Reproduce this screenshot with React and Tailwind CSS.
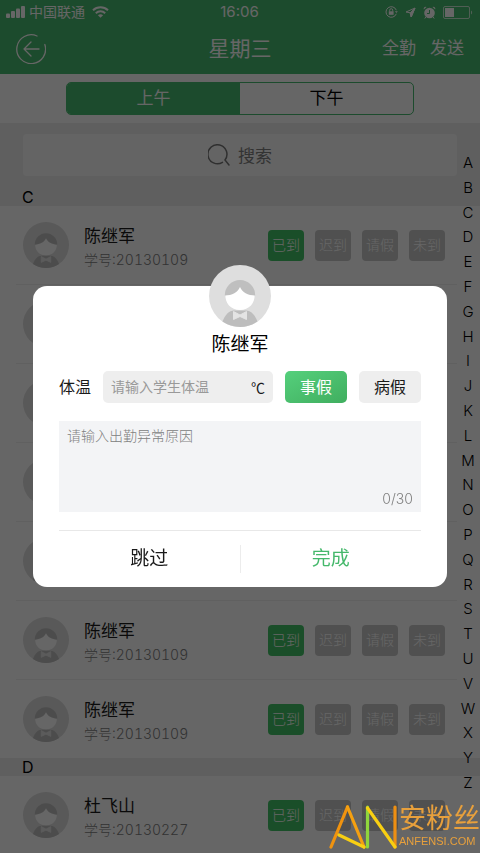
import React, { useState } from 'react';

const LETTERS = 'ABCDEFGHIJKLMNOPQRSTUVWXYZ'.split('');
const STATUSES = ['已到', '迟到', '请假', '未到'];
const MAX_REASON = 30;

const GROUPS = [
  {
    letter: 'C',
    students: Array.from({ length: 7 }, (_, i) => ({ id: `c${i}`, name: '陈继军', no: '20130109' })),
  },
  {
    letter: 'D',
    students: [{ id: 'd0', name: '杜飞山', no: '20130227' }],
  },
];

function Avatar({ className }) {
  return (
    <svg viewBox="0 0 62 62" className={className} aria-hidden="true">
      <circle cx="31" cy="31" r="31" fill="#dedede" />
      <path d="M16.500 29C24 27 28 24 31 19C34 24 38 27 45.500 29C46.500 38 40 45 31 45C22 45 15.500 38 16.500 29Z" fill="#fff" />
      <path d="M15.800 30.500A15.200 15.500 0 0 1 46.200 30.500C39 30.500 33 27 31 22C29 27 23 30.500 15.800 30.500Z" fill="#bfbfbf" />
      <path d="M13.500 56.500C16 50 20 45.500 25 45.500H37C42 45.500 46 50 48.500 56.500A31 31 0 0 1 13.500 56.500Z" fill="#bdbdbd" />
      <path d="M24.500 46.500L31 50L37.500 46.500V54.500L31 51.500L24.500 54.500Z" fill="#e4e4e4" stroke="#e4e4e4" strokeLinejoin="round" />
    </svg>
  );
}

function StatusBar() {
  return (
    <div className="grid grid-cols-3 items-center h-6 pl-[6px] pr-[7px] text-sm">
      <div className="flex items-center">
        <svg width="20" height="12" viewBox="0 0 20 12" fill="currentColor" aria-hidden="true">
          <rect x="0" y="7.500" width="4" height="4.500" rx="1" />
          <rect x="5" y="5" width="4" height="7" rx="1" />
          <rect x="10" y="2.500" width="4" height="9.500" rx="1" />
          <rect x="15" y="0" width="4" height="12" rx="1" />
        </svg>
        <span className="ml-[3px]">中国联通</span>
        <svg width="17" height="12" viewBox="0 0 17 12" className="ml-[7px]" fill="none" stroke="currentColor" strokeWidth="2" aria-hidden="true">
          <path d="M1 4.200C5.200 0.200 11.800 0.200 16 4.200" />
          <path d="M3.800 7.200C6.500 4.700 10.500 4.700 13.200 7.200" />
          <path d="M8.500 11.800L5.900 9.200C7.400 7.900 9.600 7.900 11.100 9.200Z" fill="currentColor" stroke="none" />
        </svg>
      </div>
      <span className="text-center text-[15px]">16:06</span>
      <div className="flex items-center justify-end gap-[7px]">
        <svg width="13" height="12" viewBox="0 0 13 12" fill="none" stroke="currentColor" aria-hidden="true">
          <path d="M11.300 4.200A5.300 5.300 0 1 0 11.300 7.800" />
          <path d="M9.800 5.200L11.500 7L12.800 5.200Z" fill="currentColor" stroke="none" />
          <rect x="3.800" y="5.300" width="4.800" height="3.500" fill="currentColor" stroke="none" />
          <path d="M4.700 5.500V4.200A1.500 1.500 0 0 1 7.700 4.200V5.500" />
        </svg>
        <svg width="11" height="11" viewBox="0 0 11 11" fill="none" stroke="currentColor" strokeLinejoin="round" aria-hidden="true">
          <path d="M10 1L6.200 10L5.200 5.800L1 5Z" />
          <path d="M10 1L6.200 10L5.200 5.800Z" fill="currentColor" />
        </svg>
        <svg width="13" height="13" viewBox="0 0 13 13" fill="currentColor" aria-hidden="true">
          <circle cx="6.500" cy="7" r="5.300" />
          <path d="M0.800 3.500A2 2 0 0 1 3.500 1Z" />
          <path d="M12.200 3.500A2 2 0 0 0 9.500 1Z" />
          <path d="M2.800 11L1.800 12.500M10.200 11L11.200 12.500" stroke="currentColor" />
          <path d="M6.500 4V7.500H4" fill="none" stroke="#48bb70" />
        </svg>
        <svg width="30" height="13" viewBox="0 0 30 13" fill="none" aria-hidden="true">
          <rect x="0.500" y="0.500" width="26" height="12" rx="1.500" stroke="currentColor" opacity="0.700" />
          <rect x="2" y="2" width="9" height="9" fill="currentColor" />
          <path d="M28 4.500C29.500 5 29.500 8 28 8.500Z" fill="currentColor" opacity="0.700" />
        </svg>
      </div>
    </div>
  );
}

function NavBar() {
  return (
    <div className="grid grid-cols-3 items-center h-[50px] px-4">
      <button type="button" aria-label="返回" className="w-[30px]">
        <svg width="30" height="30" viewBox="0 0 30 30" fill="none" stroke="currentColor" strokeWidth="1.300" strokeLinecap="round" strokeLinejoin="round">
          <path d="M21 2A14.400 14.400 0 1 0 28.800 10.500" />
          <path d="M23 15H8M15 8L8 15L15 22" />
        </svg>
      </button>
      <h1 className="text-center text-[21px]">星期三</h1>
      <div className="flex justify-end gap-[14px] text-[17px]">
        <button type="button">全勤</button>
        <button type="button">发送</button>
      </div>
    </div>
  );
}

function StudentRow({ student }) {
  const [status, setStatus] = useState('已到');

  return (
    <li className="flex items-center h-[78px] box-content pl-[7px] pr-3 border-b border-[#f0f0f0] last:border-b-0">
      <Avatar className="w-[46px] h-[46px] shrink-0" />
      <div className="ml-[15px] pt-[5px] flex-1">
        <p className="text-[17px] leading-6">{student.name}</p>
        <p className="text-sm leading-6 text-[#808080] font-light tabular-nums">学号:{student.no}</p>
      </div>
      <div className="flex gap-[11px]">
        {STATUSES.map((item) => (
          <button
            key={item}
            type="button"
            onClick={() => setStatus(item)}
            className={`w-9 h-[31px] rounded text-sm font-light text-white ${
              item === status ? 'bg-[#43c466]' : 'bg-[#c8c8c8]'
            }`}
          >
            {item}
          </button>
        ))}
      </div>
    </li>
  );
}

function AbsenceDialog() {
  const [type, setType] = useState('事假');
  const [temperature, setTemperature] = useState('');
  const [reason, setReason] = useState('');

  return (
    <div className="fixed inset-0 flex flex-col justify-center px-[33px] pb-px bg-black/60">
      <Avatar className="relative z-10 w-[62px] h-[62px] mx-auto -mb-[41px]" />
      <div role="dialog" aria-label="陈继军" className="bg-white rounded-[14px] px-[26px] pt-[47px]">
        <h2 className="text-center text-[19px] leading-6 text-black">陈继军</h2>

        <div className="flex items-center gap-3 mt-[14px] h-8 text-base">
          <label htmlFor="temperature">体温</label>
          <div className="flex items-center flex-1 min-w-0 h-8 px-2 rounded-[5px] bg-[#eee]">
            <input
              id="temperature"
              value={temperature}
              onChange={(e) => setTemperature(e.target.value)}
              placeholder="请输入学生体温"
              className="flex-1 min-w-0 bg-transparent text-sm outline-none placeholder:text-[#999]"
            />
            <span className="font-['Noto_Sans_CJK_SC',sans-serif] text-sm">℃</span>
          </div>
          {['事假', '病假'].map((item) => (
            <button
              key={item}
              type="button"
              onClick={() => setType(item)}
              className={`w-[62px] h-8 rounded-[5px] ${
                item === type ? 'bg-linear-to-br from-[#55d07c] to-[#40ae5f] text-white' : 'bg-[#eee]'
              }`}
            >
              {item}
            </button>
          ))}
        </div>

        <div className="flex flex-col mt-[18px] h-[91px] px-2 py-[3px] bg-[#f3f4f6] text-sm">
          <textarea
            aria-label="出勤异常原因"
            value={reason}
            maxLength={MAX_REASON}
            onChange={(e) => setReason(e.target.value)}
            placeholder="请输入出勤异常原因"
            className="flex-1 resize-none bg-transparent leading-6 outline-none font-light placeholder:text-[#808080]"
          />
          <span className="text-right font-light text-[#808080]">
            {reason.length}/{MAX_REASON}
          </span>
        </div>

        <div className="flex items-center mt-[18px] border-t border-[#e8e8e8] text-[19px]">
          <button type="button" className="flex-1 h-14">跳过</button>
          <span className="w-px h-7 bg-[#ececec]" />
          <button type="button" className="flex-1 h-14 text-[#45b86b]">完成</button>
        </div>
      </div>
    </div>
  );
}

function Watermark() {
  return (
    <div className="fixed right-0 bottom-1 flex items-end text-[#e8a03c]">
      <svg width="70" height="44" viewBox="0 0 70 44" fill="none" strokeWidth="3.200" strokeLinecap="round" aria-hidden="true">
        <path d="M18.500 2L2 42" stroke="#f0930f" />
        <path d="M18.500 2L35 42" stroke="#f5a010" />
        <path d="M10 30L35 42" stroke="#f8cf12" />
        <path d="M38.500 2V42" stroke="#8fd63c" />
        <path d="M66 2V42" stroke="#ee8f12" />
        <path d="M38.500 3L66 42" stroke="#f8cf12" />
      </svg>
      <div className="flex flex-col">
        <span className="text-[27px] leading-7">安粉丝</span>
        <span className="font-['Liberation_Sans',sans-serif] text-[11px] leading-4">ANFENSI.COM</span>
      </div>
    </div>
  );
}

function App() {
  const [period, setPeriod] = useState('上午');

  return (
    <div className="relative h-screen overflow-hidden bg-white text-[#1a1a1a] font-[Inter,'Noto_Sans_CJK_SC',sans-serif]">
      <header className="bg-[#48bb70] text-white">
        <StatusBar />
        <NavBar />
      </header>

      <div className="h-[49px] px-[66px] pt-2">
        <div className="flex h-[33px] rounded-[5px] border border-[#48bb70] overflow-hidden text-[17px]">
          {['上午', '下午'].map((item) => (
            <button
              key={item}
              type="button"
              onClick={() => setPeriod(item)}
              className={`flex-1 ${item === period ? 'bg-[#48bb70] text-white' : 'text-black'}`}
            >
              {item}
            </button>
          ))}
        </div>
      </div>

      <div className="bg-[#eee] px-[23px] pt-[11px] pb-3">
        <label className="flex items-center justify-center gap-2 h-[42px] rounded bg-[#fafafa]">
          <svg width="22" height="22" viewBox="0 0 22 22" fill="none" stroke="#777" strokeWidth="1.500" strokeLinecap="round" aria-hidden="true">
            <path d="M14.500 18.300A9.500 9.500 0 1 1 17 16L21 21" />
          </svg>
          <input
            type="search"
            aria-label="搜索"
            placeholder="搜索"
            className="field-sizing-content bg-transparent text-[17px] outline-none placeholder:text-[#808080]"
          />
        </label>
      </div>

      {GROUPS.map((group) => (
        <section key={group.letter} id={group.letter}>
          <h2 className="h-[18px] pl-[22px] bg-[#eee] text-base leading-[18px] text-black">{group.letter}</h2>
          <ul className="ml-4 mr-[23px]">
            {group.students.map((student) => (
              <StudentRow key={student.id} student={student} />
            ))}
          </ul>
        </section>
      ))}

      <nav className="absolute right-0 top-[153px] bottom-[60px] w-6 flex flex-col justify-between items-center text-[15px] leading-5 font-light text-black">
        {LETTERS.map((letter) => (
          <a key={letter} href={`#${letter}`}>{letter}</a>
        ))}
      </nav>

      <AbsenceDialog />
      <Watermark />
    </div>
  );
}

export default App;
